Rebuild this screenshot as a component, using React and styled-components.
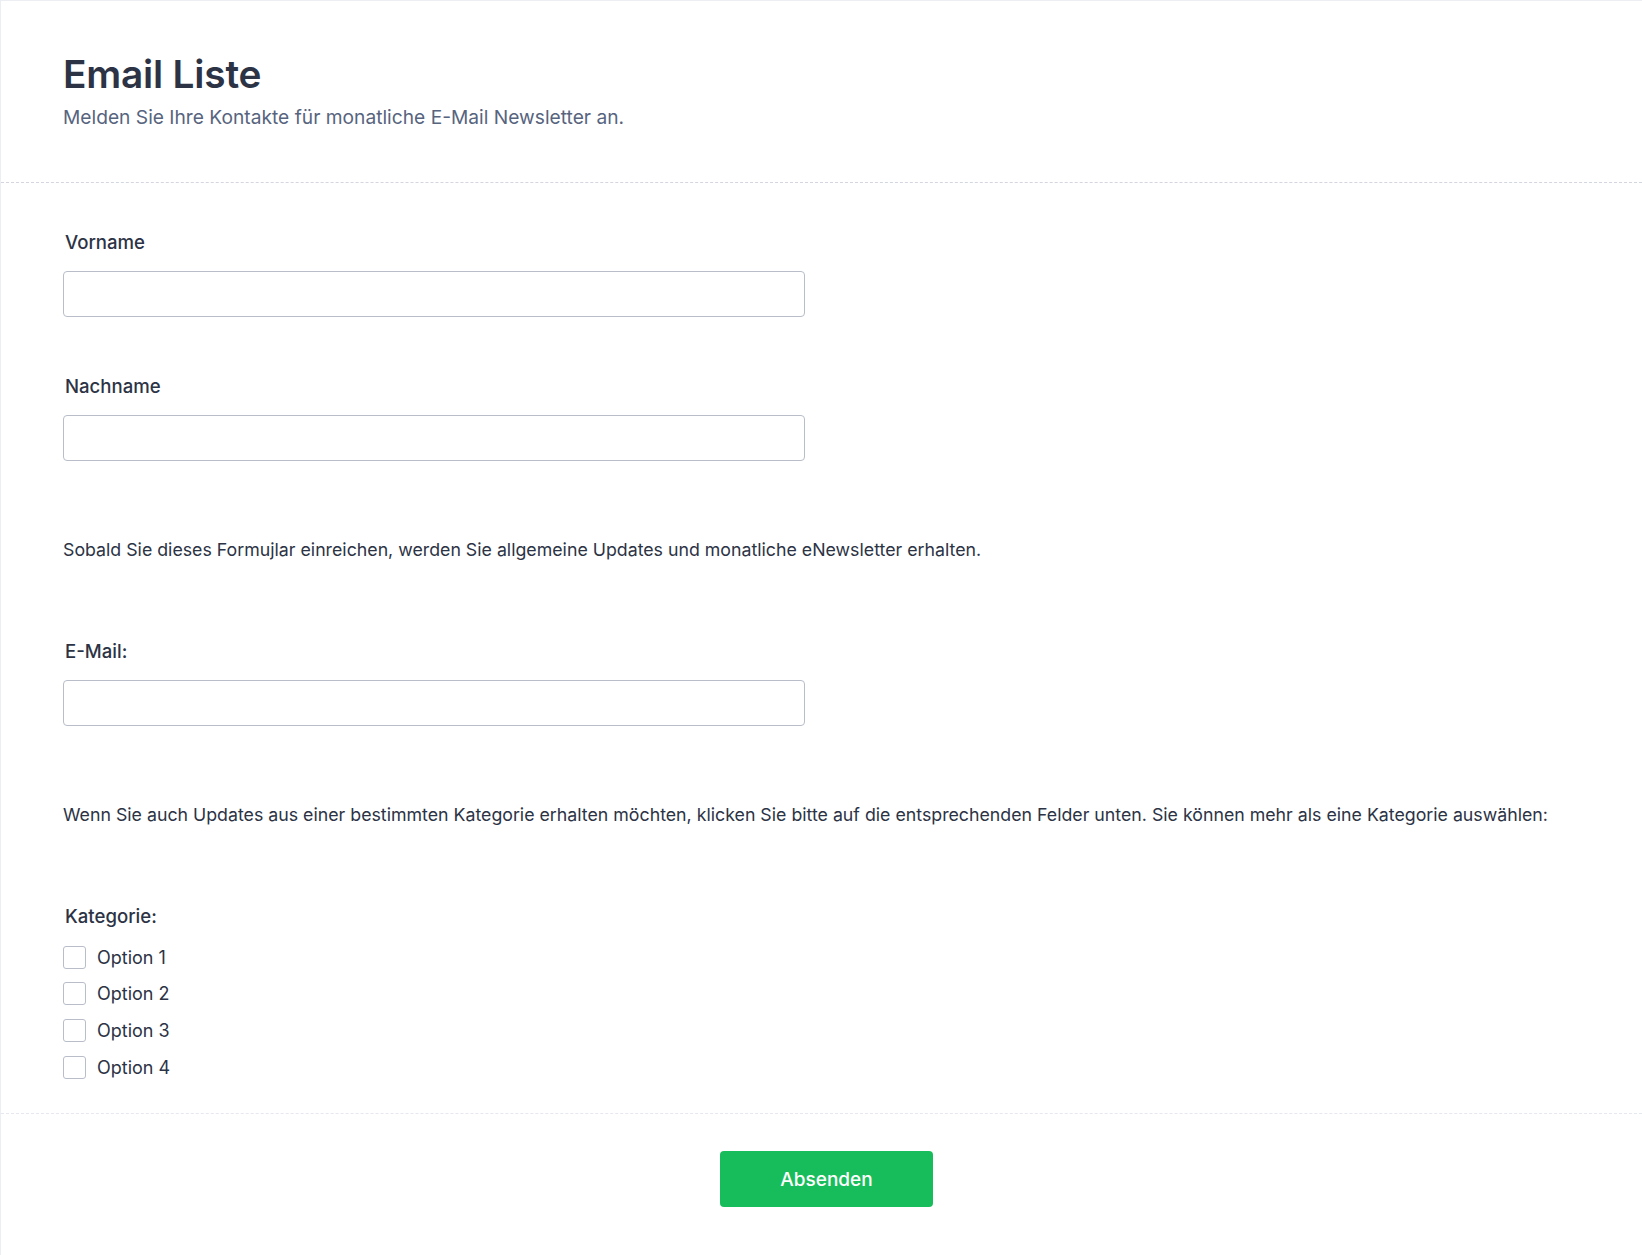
import React from 'react';
import styled, { createGlobalStyle } from 'styled-components';

const GlobalStyle = createGlobalStyle`
  html, body {
    margin: 0;
    padding: 0;
    background: #ffffff;
  }
  body {
    font-family: Inter, "Noto Sans", "Liberation Sans", sans-serif;
    color: #2c3345;
    -webkit-font-smoothing: antialiased;
  }
  * {
    box-sizing: border-box;
  }
`;

const Card = styled.form`
  width: 100%;
  min-height: 1255px;
  border-top: 1px solid #eceef3;
  border-left: 1px solid #eceef3;
  background: #ffffff;
  display: flex;
  flex-direction: column;
`;

const Header = styled.header`
  padding: 50px 62px 52px;
  border-bottom: 1px dashed #d3d6de;
`;

const Title = styled.h1`
  margin: 0;
  font-size: 38.8px;
  line-height: 46px;
  font-weight: 600;
  color: #2c3345;
  letter-spacing: -0.2px;
`;

const Subtitle = styled.p`
  margin: 7px 0 0;
  font-size: 19.2px;
  line-height: 26px;
  color: #57647e;
`;

const Body = styled.div`
  display: flex;
  flex-direction: column;
  padding: 47px 62px 28px;
  border-bottom: 1px dashed #e6e8f0;
`;

const Block = styled.div`
  display: flex;
  flex-direction: column;
  margin-top: ${p => p.$space || 0}px;
`;

const Label = styled.label`
  font-size: 18.6px;
  line-height: 24px;
  font-weight: 500;
  color: #2c3345;
  padding-left: 2px;
  margin-bottom: ${p => p.$below || 17}px;
`;

const TextInput = styled.input`
  width: 742px;
  height: 46px;
  border: 1px solid #b8bdc9;
  border-radius: 4px;
  background: #ffffff;
  padding: 0 12px;
  font-family: inherit;
  font-size: 16px;
  color: #2c3345;
  outline: none;
`;

const Paragraph = styled.p`
  margin: 0;
  font-size: 17.75px;
  line-height: 24px;
  color: #2c3345;
`;

const OptionList = styled.div`
  display: flex;
  flex-direction: column;
`;

const OptionRow = styled.label`
  display: flex;
  align-items: center;
  gap: 11px;
  height: 36.6px;
  font-size: 18px;
  color: #2c3345;
`;

const Box = styled.span`
  width: 23px;
  height: 23px;
  border: 1px solid #b8bdc9;
  border-radius: 3px;
  background: #ffffff;
  flex-shrink: 0;
`;

const Footer = styled.div`
  display: flex;
  justify-content: center;
  padding: 37px 0 49px;
`;

const Submit = styled.button`
  width: 213px;
  height: 56px;
  border: none;
  border-radius: 4px;
  background: #18bd5b;
  color: #ffffff;
  font-family: inherit;
  font-size: 19px;
  font-weight: 500;
  margin-left: 10px;
  cursor: pointer;
`;

const options = ['Option 1', 'Option 2', 'Option 3', 'Option 4'];

export default function App() {
  return (
    <>
      <GlobalStyle />
      <Card onSubmit={e => e.preventDefault()}>
        <Header>
          <Title>Email Liste</Title>
          <Subtitle>Melden Sie Ihre Kontakte für monatliche E-Mail Newsletter an.</Subtitle>
        </Header>
        <Body>
          <Block>
            <Label>Vorname</Label>
            <TextInput type="text" />
          </Block>
          <Block $space={57}>
            <Label>Nachname</Label>
            <TextInput type="text" />
          </Block>
          <Block $space={77}>
            <Paragraph>
              Sobald Sie dieses Formujlar einreichen, werden Sie allgemeine Updates und monatliche eNewsletter erhalten.
            </Paragraph>
          </Block>
          <Block $space={77}>
            <Label>E-Mail:</Label>
            <TextInput type="email" />
          </Block>
          <Block $space={77}>
            <Paragraph>
              Wenn Sie auch Updates aus einer bestimmten Kategorie erhalten möchten, klicken Sie bitte auf die entsprechenden Felder unten. Sie können mehr als eine Kategorie auswählen:
            </Paragraph>
          </Block>
          <Block $space={77}>
            <Label $below={11}>Kategorie:</Label>
            <OptionList>
              {options.map(o => (
                <OptionRow key={o}>
                  <Box />
                  {o}
                </OptionRow>
              ))}
            </OptionList>
          </Block>
        </Body>
        <Footer>
          <Submit type="submit">Absenden</Submit>
        </Footer>
      </Card>
    </>
  );
}
